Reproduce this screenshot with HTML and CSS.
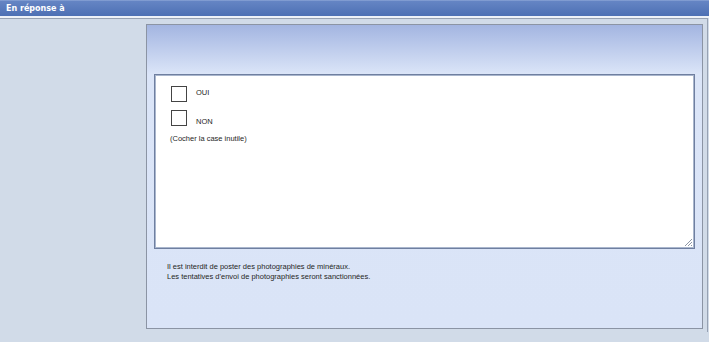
FILE: index.html
```html
<!DOCTYPE html>
<html lang="fr">
<head>
    <meta charset="UTF-8">
    <meta name="viewport" content="width=device-width, initial-scale=1.0">
    <title>En réponse à</title>
    <link rel="stylesheet" href="styles.css">
</head>
<body>
    <div class="titlebar">En réponse à</div>

    <div class="row">
        <div class="side"></div>
        <div class="main">
            <div class="panel">
                <div class="editor">
                    <div class="choice choice-oui">
                        <span class="box"></span>
                        <span class="choice-label">OUI</span>
                    </div>
                    <div class="choice choice-non">
                        <span class="box"></span>
                        <span class="choice-label">NON</span>
                    </div>
                    <p class="hint">(Cocher la case inutile)</p>
                    <svg class="grip" width="7" height="7" viewBox="0 0 7 7">
                        <path d="M7 0 L0 7 M7 3 L3 7 M7 6 L6 7" stroke="#8d96a6" stroke-width="1" fill="none"/>
                    </svg>
                </div>
                <p class="notice">
                    Il est interdit de poster des photographies de minéraux.<br>
                    Les tentatives d'envoi de photographies seront sanctionnées.
                </p>
            </div>
        </div>
    </div>

    <div class="footer-line"></div>
</body>
</html>
```

FILE: styles.css
```css
/* Reply form frame */
body {
    margin: 0;
    width: 709px;
    height: 342px;
    overflow: hidden;
    background-color: #d1dbe8;
    font-family: "Liberation Sans", Arial, sans-serif;
    color: #262626;
}
.titlebar {
    height: 16px;
    padding-left: 6px;
    background: linear-gradient(#9ab1dd 0, #6585c4 1px, #4d70b4 100%);
    color: #fff;
    font-family: "DejaVu Sans", Verdana, sans-serif;
    font-weight: bold;
    font-size: 8px;
    line-height: 17px;
    border-bottom: 2px solid #eef2f8;
}
.row {
    display: flex;
    height: 308px;
    border-top: 1px solid #97a2b3;
    border-right: 1px solid #97a2b3;
    margin-right: 1px;
    padding: 5px 4px 0 0;
}
.side {
    width: 146px;
    flex-shrink: 0;
}
.main {
    flex: 1;
}
.panel {
    box-sizing: border-box;
    height: 305px;
    border: 1px solid #8b94a4;
    background: linear-gradient(#a3b5e1 0, #dbe5f8 49px, #dae4f7 100%);
    padding: 49px 7px 0 7px;
}
.editor {
    position: relative;
    box-sizing: border-box;
    height: 175px;
    background-color: #fff;
    border: 1px solid #6f7fa0;
    box-shadow: inset 1px 1px 0 #a9b6cd, inset -1px -1px 0 #a9b6cd;
    padding: 11px 0 0 16px;
}
.choice {
    display: flex;
    align-items: flex-start;
    height: 16px;
}
.choice-non {
    margin-top: 8px;
}
.box {
    box-sizing: border-box;
    width: 16px;
    height: 16px;
    border: 1px solid #444;
}
.choice-label {
    margin-left: 9px;
    font-size: 7.5px;
    line-height: 10px;
}
.choice-oui .choice-label {
    padding-top: 2px;
}
.choice-non .choice-label {
    padding-top: 7px;
}
.hint {
    margin: 8px 0 0 -1px;
    font-size: 7.5px;
    line-height: 10px;
}
.grip {
    position: absolute;
    right: 2px;
    bottom: 2px;
}
.notice {
    margin: 13px 0 0 13px;
    font-size: 7.5px;
    line-height: 10px;
}
.footer-line {
    height: 1px;
    margin: 11px 0 0 3px;
    background-color: #8f9aab;
}
```
